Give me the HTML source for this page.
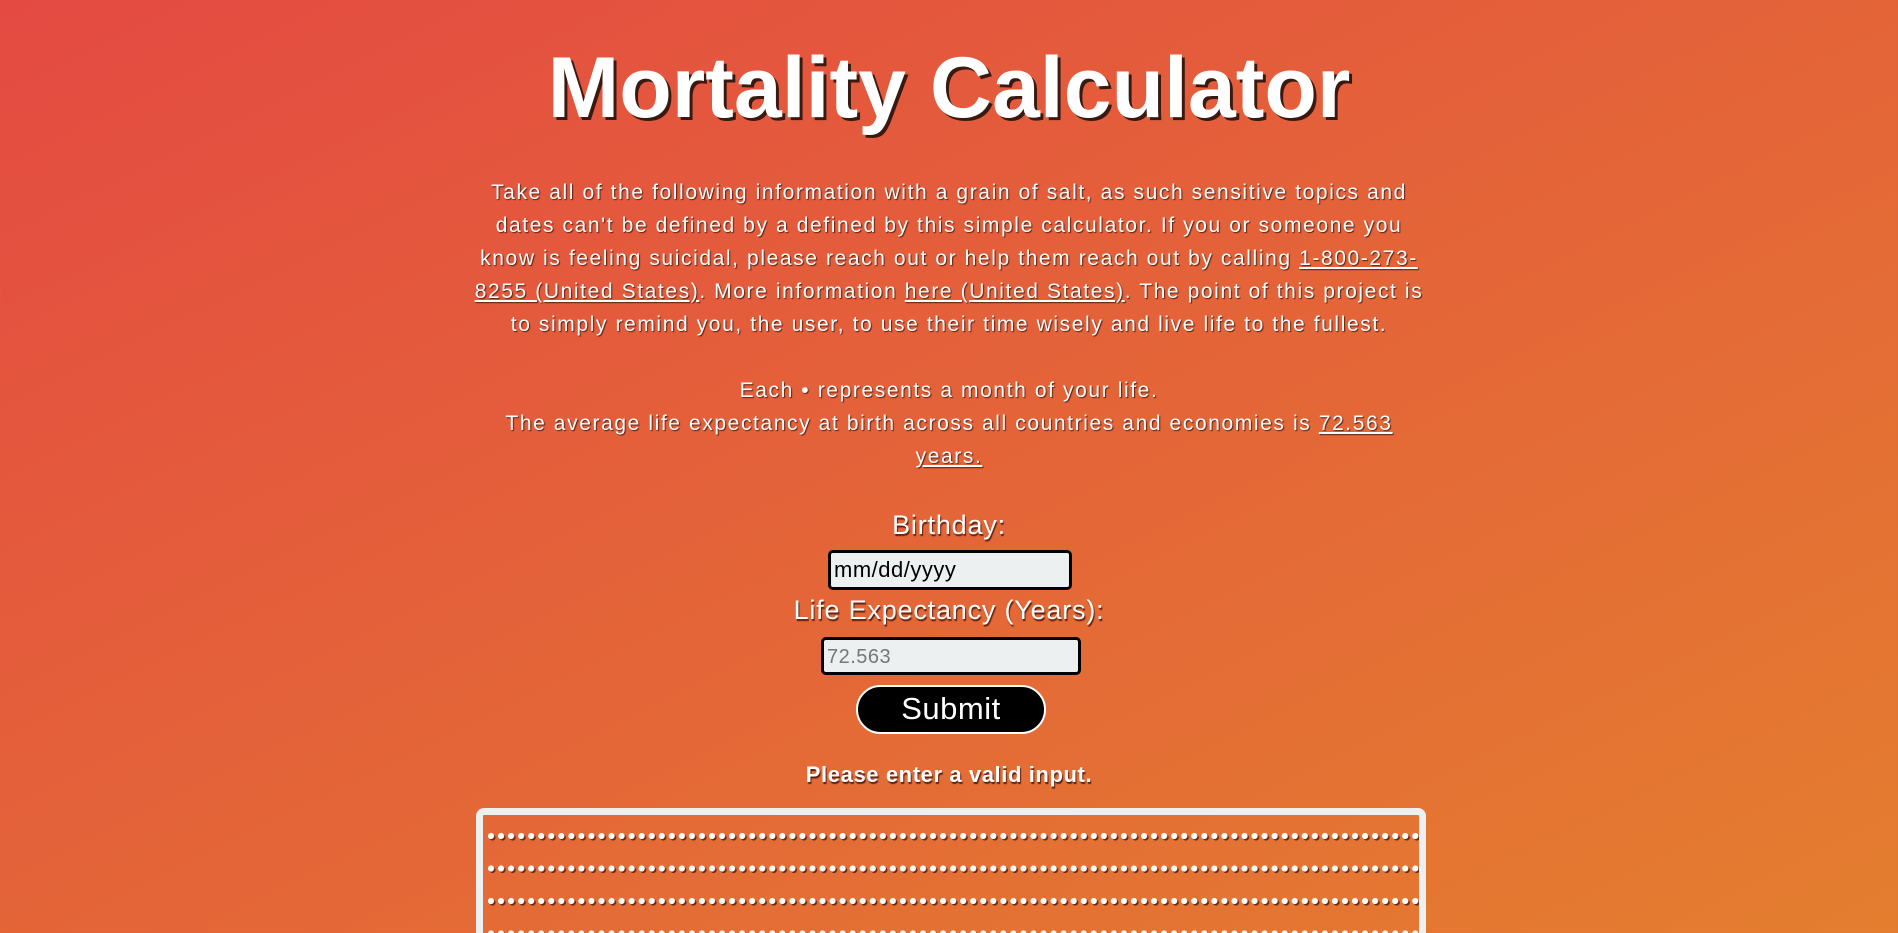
<!DOCTYPE html>
<html><head><meta charset="utf-8"><style>
html,body{margin:0;padding:0;width:1898px;height:933px;overflow:hidden}
body{background:linear-gradient(to bottom right,#e44a42,#e47e2f);font-family:"Liberation Sans",sans-serif;color:#fff;position:relative}
.c{position:absolute;left:0;width:1898px;text-align:center;white-space:nowrap}
h1{margin:0;font-size:86px;font-weight:bold;text-shadow:3px 3px 0 #3a1a10;top:38px;line-height:100px}
.p{font-size:21px;letter-spacing:1.6px;text-shadow:1px 1px 1px #5a2010;line-height:33px}
.p a{color:#fff;text-decoration:underline}
.lab{font-size:27px;text-shadow:1px 2px 1px #5a2010;letter-spacing:0.8px}
.in{position:absolute;background:#ecf0f1;border:3px solid #000;border-radius:5px;box-sizing:border-box;font-size:22px;line-height:34px;padding-left:3px;white-space:nowrap;letter-spacing:0.5px}
.btn{position:absolute;left:856px;top:685px;width:190px;height:49px;background:#000;border:2px solid #fff;border-radius:25px;box-sizing:border-box;font-size:31px;line-height:44px;text-align:center;letter-spacing:0.5px}
.box{position:absolute;left:476px;top:808px;width:950px;height:200px;border:7px solid #ecf0f1;border-radius:8px;box-sizing:border-box}
.dots{position:absolute;left:4px;top:16px;width:932px;height:200px;
background:radial-gradient(circle at 4px 5px,#fff 2.8px,transparent 3.3px),radial-gradient(circle at 5.5px 6.5px,#6a2a10 2.8px,transparent 3.3px);
background-size:10.05px 32.5px}
</style></head><body>
<h1 class="c">Mortality Calculator</h1>
<div class="c p" style="top:176px">Take all of the following information with a grain of salt, as such sensitive topics and<br>dates can't be defined by a defined by this simple calculator. If you or someone you<br>know is feeling suicidal, please reach out or help them reach out by calling <a>1-800-273-</a><br><a>8255 (United States)</a>. More information <a>here (United States)</a>. The point of this project is<br>to simply remind you, the user, to use their time wisely and live life to the fullest.</div>
<div class="c p" style="top:374px">Each • represents a month of your life.<br>The average life expectancy at birth across all countries and economies is <a>72.563</a><br><a>years.</a></div>
<div class="c lab" style="top:510px">Birthday:</div>
<div class="in" style="left:828px;top:550px;width:244px;height:40px;color:#000">mm/dd/yyyy</div>
<div class="c lab" style="top:595px">Life Expectancy (Years):</div>
<div class="in" style="left:821px;top:637px;width:260px;height:38px;color:#777;font-size:20px">72.563</div>
<div class="btn">Submit</div>
<div class="c" style="top:762px;font-size:22px;font-weight:bold;letter-spacing:0.6px;text-shadow:1px 2px 1px #5a2010">Please enter a valid input.</div>
<div class="box"><div class="dots"></div></div>
</body></html>
